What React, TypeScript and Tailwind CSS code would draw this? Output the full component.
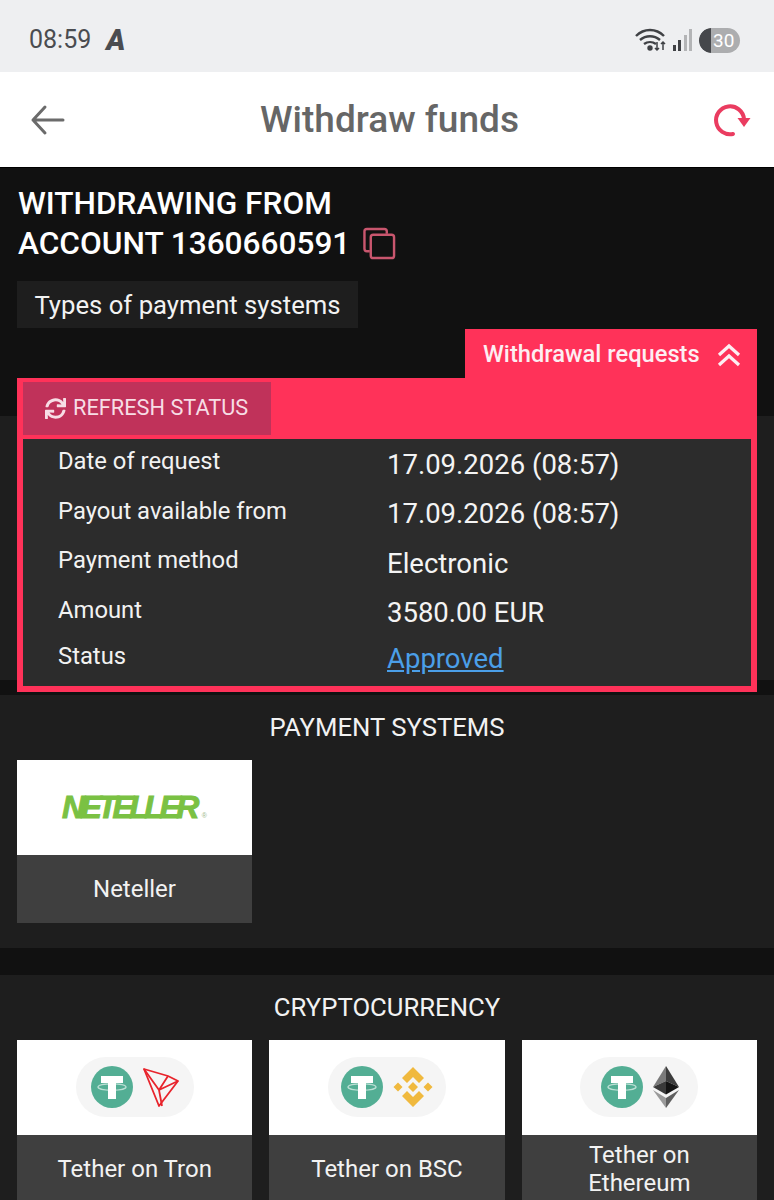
import { FaSync } from "react-icons/fa";

const requestRows = [
  { label: "Date of request", value: "17.09.2026 (08:57)" },
  { label: "Payout available from", value: "17.09.2026 (08:57)" },
  { label: "Payment method", value: "Electronic" },
  { label: "Amount", value: "3580.00 EUR" },
];

const TetherIcon = () => (
  <svg width="44" height="44" viewBox="0 0 44 44">
    <circle cx="22" cy="22" r="21" fill="#53ae94" />
    <path d="M11 11h22v7h-7v16h-8V18h-7z" fill="#fff" />
    <ellipse cx="22" cy="22" rx="14" ry="3.2" fill="none" stroke="#fff" strokeOpacity="0.6" strokeWidth="1.3" />
  </svg>
);

const TronIcon = () => (
  <svg width="36" height="40" viewBox="0 0 36 40" fill="none" stroke="#e8242c" strokeWidth="1.8" strokeLinejoin="round">
    <path d="M1 2l24 7 10 5-19 25z" />
    <path d="M1 2l15 21 3 16M16 23l9-14M16 23l19-9" />
  </svg>
);

const BnbIcon = () => (
  <svg width="40" height="40" viewBox="0 0 40 40" fill="#f0b93e">
    <path d="M20 0l11 11-5 5-6-6-6 6-5-5zM20 40L9 29l5-5 6 6 6-6 5 5z" />
    <path d="M5 15.500l4.500 4.500L5 24.500.5 20zM35 15.500l4.500 4.500-4.500 4.500-4.500-4.500zM20 15l5 5-5 5-5-5z" />
  </svg>
);

const EthIcon = () => (
  <svg width="26" height="42" viewBox="0 0 26 42">
    <path d="M13 0L0 21l13-6z" fill="#7a7a7a" />
    <path d="M13 0l13 21-13-6z" fill="#3c3c3c" />
    <path d="M13 15L0 21l13 7.500z" fill="#3a3a3a" />
    <path d="M13 15l13 6-13 7.500z" fill="#141414" />
    <path d="M0 24l13 18V32z" fill="#9a9a9a" />
    <path d="M26 24L13 42V32z" fill="#5f5f5f" />
  </svg>
);

const PaymentCard = ({ label, children }: { label: string; children: React.ReactNode }) => (
  <div className="flex flex-col">
    <div className="h-[94.500px] bg-white flex items-center justify-center">{children}</div>
    <div className="h-[68.500px] bg-[#3f3f3f] flex items-center justify-center text-center text-[24px] leading-[28px] text-[#f2f2f2] px-8">
      {label}
    </div>
  </div>
);

const CoinPair = ({ second }: { second: React.ReactNode }) => (
  <div className="w-[118px] h-[60px] rounded-[30px] bg-[#f5f5f5] flex items-center justify-center gap-[9px]">
    <TetherIcon />
    {second}
  </div>
);

const StatusBar = () => (
  <div className="h-[72px] bg-[#eeeff1] flex items-center justify-between pl-[29px] pr-[34px] pt-[8px] text-[#4a4c50]">
    <div className="flex items-center gap-[15px]">
      <span className="text-[25px]">08:59</span>
      <span className="text-[29px] font-black italic leading-none">A</span>
    </div>
    <div className="flex items-center gap-[6px]">
      <svg width="32" height="24" viewBox="0 0 32 24" fill="none" stroke="#3f4145" strokeWidth="2.4">
        <path d="M1 8c8-8 20-8 28 0M5 12c6-5 14-5 20 0M9 16c3.500-2.500 8.500-2.500 12 0" />
        <circle cx="15" cy="20" r="1.500" fill="#3f4145" />
        <path d="M22 14v8M20 20l2 2 2-2M28 22v-8M26 16l2-2 2 2" strokeWidth="1.500" />
      </svg>
      <div className="flex items-end gap-[2.500px] h-[22px]">
        <div className="w-[3px] h-[6px] bg-[#3f4145]" />
        <div className="w-[3px] h-[11px] bg-[#3f4145]" />
        <div className="w-[3px] h-[16px] bg-[#b3b4b6]" />
        <div className="w-[3px] h-[22px] bg-[#b3b4b6]" />
      </div>
      <div className="w-[41px] h-[25px] rounded-full bg-[#acadaf] overflow-hidden flex items-center ml-[1px]">
        <div className="w-[12px] h-full bg-[#45474b] rounded-l-full" />
        <span className="text-white text-[19px] leading-none ml-[2px]">30</span>
      </div>
    </div>
  </div>
);

const Header = () => (
  <div className="h-[96px] bg-white border-b border-black flex items-center justify-between pl-[30px] pr-[23px]">
    <svg width="36" height="32" viewBox="0 0 36 32" fill="none" stroke="#6b6b6b" strokeWidth="3" strokeLinecap="round" strokeLinejoin="round">
      <path d="M33 16H3M15 3L3 16l12 13" />
    </svg>
    <span className="text-[37px] font-medium text-[#666666] ml-[2px]">Withdraw funds</span>
    <svg width="40" height="36" viewBox="0 0 40 36" fill="none">
      <path d="M33 17A14 14 0 1 0 22 32" stroke="#ea3c60" strokeWidth="4" strokeLinecap="round" />
      <path d="M26.500 16h13l-6.500 9z" fill="#ea3c60" />
    </svg>
  </div>
);

const WithdrawalPanel = () => (
  <div className="absolute top-[329px] left-[17px] w-[740px] flex flex-col items-end">
    <div className="w-[292px] h-[49px] bg-[#ff3259] flex items-center justify-between pl-[18px] pr-[16px] pt-[3px]">
      <span className="text-[23.700px] font-medium text-[#fdeef2]">Withdrawal requests</span>
      <svg width="24" height="24" viewBox="0 0 24 24" fill="none" stroke="#fdeef2" strokeWidth="3.200">
        <path d="M2 12L12 3l10 9M2 22l10-9 10 9" />
      </svg>
    </div>
    <div className="w-full h-[314px] bg-[#ff3259] flex flex-col px-[6px] pb-[6px]">
      <div className="h-[61px] pt-[4px]">
        <div className="w-[248px] h-[53px] bg-[#c0325a] flex items-center gap-[7px] pl-[22px] text-[#f7dde5]">
          <FaSync className="w-[21px] h-[21px]" />
          <span className="text-[21.750px]">REFRESH STATUS</span>
        </div>
      </div>
      <div className="flex-1 bg-[#2c2c2c] pl-[35px] pt-[1px]">
        {requestRows.map((row) => (
          <div key={row.label} className="h-[49.400px] flex items-center">
            <span className="w-[329px] text-[23.800px] -mt-[5px] text-[#f2f2f2]">{row.label}</span>
            <span className="text-[27.500px] text-[#f4f4f4]">{row.value}</span>
          </div>
        ))}
        <div className="h-[45px] flex items-center">
          <span className="w-[329px] text-[23.800px] -mt-[6px] text-[#f2f2f2]">Status</span>
          <span className="text-[27.500px] -mt-[3px] text-[#4b9fe8] underline">Approved</span>
        </div>
      </div>
    </div>
  </div>
);

export default function App() {
  return (
    <div className="relative w-[774px] h-[1200px] overflow-hidden bg-[#111111] font-['Roboto',sans-serif]">
      <StatusBar />
      <Header />

      <div className="h-[248px] px-[18px] pt-[16px]">
        <h1 className="text-[31.600px] leading-[40px] font-medium text-white">
          WITHDRAWING FROM
          <br />
          ACCOUNT 1360660591
          <svg className="inline-block ml-[13px] align-[-6px]" width="33" height="33" viewBox="0 0 34 34" fill="none" stroke="#c9566e" strokeWidth="2.500">
            <path d="M7 25H4a2.500 2.500 0 0 1-2.500-2.500v-18A2.500 2.500 0 0 1 4 2h18a2.500 2.500 0 0 1 2.500 2.500V7" />
            <rect x="8" y="8" width="24" height="24" rx="2.500" />
          </svg>
        </h1>
        <div className="mt-[17px] -ml-[1px] w-[341px] h-[47px] bg-[#1e1e1e] flex items-center justify-center pt-[1px] text-[25.700px] text-[#f2f2f2]">
          Types of payment systems
        </div>
      </div>

      <div className="h-[264px] bg-[#1e1e1e]" />

      <div className="mt-[15px] h-[253px] bg-[#1e1e1e] px-[17px]">
        <h2 className="h-[65px] pt-[14px] text-center text-[25.700px] leading-[36px] text-[#f2f2f2]">PAYMENT SYSTEMS</h2>
        <div className="w-[235px]">
          <PaymentCard label="Neteller">
            <span className="flex items-end italic font-black text-[#7ac143] text-[32px] leading-none tracking-[-4.500px] [-webkit-text-stroke:1px_#7ac143] font-['Liberation_Sans',sans-serif]">
              NETELLER
              <span className="text-[7px] tracking-normal not-italic font-normal text-[#9bb88a] [-webkit-text-stroke:0] ml-[7px] mb-[4px]">®</span>
            </span>
          </PaymentCard>
        </div>
      </div>

      <div className="mt-[27px] h-[225px] bg-[#1e1e1e] px-[17px]">
        <h2 className="h-[65px] pt-[14px] text-center text-[25.700px] leading-[36px] text-[#f2f2f2]">CRYPTOCURRENCY</h2>
        <div className="grid grid-cols-3 gap-[17px]">
          <PaymentCard label="Tether on Tron">
            <CoinPair second={<TronIcon />} />
          </PaymentCard>
          <PaymentCard label="Tether on BSC">
            <CoinPair second={<BnbIcon />} />
          </PaymentCard>
          <PaymentCard label="Tether on Ethereum">
            <CoinPair second={<EthIcon />} />
          </PaymentCard>
        </div>
      </div>

      <WithdrawalPanel />
    </div>
  );
}
